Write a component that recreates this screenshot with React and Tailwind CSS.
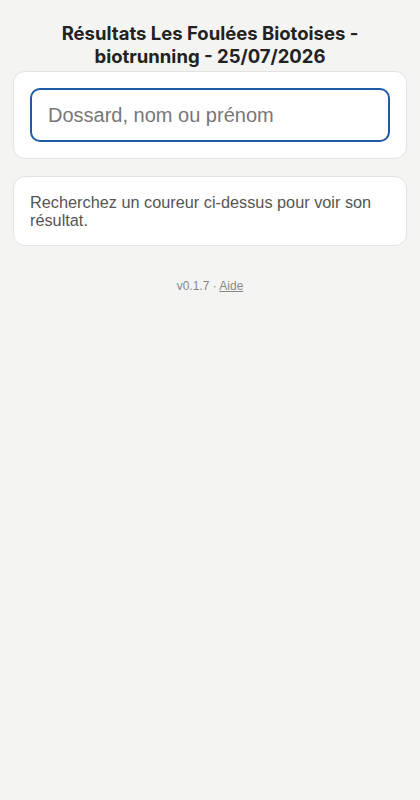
export default function App() {
  return (
    <div className="min-h-screen bg-[#f4f4f2] px-[13px] pt-[22px]" style={{ fontFamily: '"Liberation Sans", Arial, sans-serif' }}>
      <h1 className="text-center text-[18.5px] leading-[23px] font-bold text-[#222] font-['Inter',sans-serif] px-4">
        Résultats Les Foulées Biotoises - biotrunning - 25/07/2026
      </h1>
      <div className="mt-[3px] rounded-xl border border-[#e2e2e0] bg-white p-4">
        <input
          type="text"
          placeholder="Dossard, nom ou prénom"
          className="block w-full h-[54px] rounded-[10px] border-2 border-[#1f5aa6] bg-white px-4 text-[20px] text-[#333] placeholder:text-[#777] outline-none"
        />
      </div>
      <div className="mt-[17px] rounded-xl border border-[#e2e2e0] bg-white px-4 pt-[16px] pb-[16px] text-[16.3px] leading-[18px] text-[#555]">
        Recherchez un coureur ci-dessus pour voir son résultat.
      </div>
      <div className="mt-[31px] text-center text-[12px] text-[#888]">
        v0.1.7 · <a href="#" className="underline text-[#888]">Aide</a>
      </div>
    </div>
  );
}
